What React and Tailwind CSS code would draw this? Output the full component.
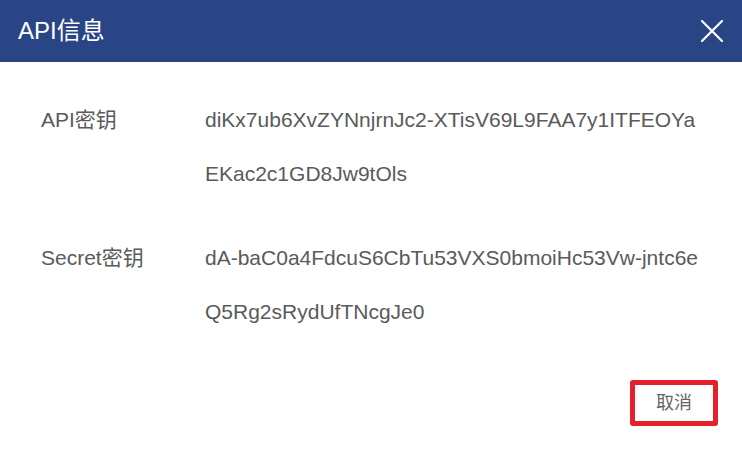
export default function App() {
  const rows = [
    { label: "API密钥", value: "diKx7ub6XvZYNnjrnJc2-XTisV69L9FAA7y1ITFEOYaEKac2c1GD8Jw9tOls" },
    { label: "Secret密钥", value: "dA-baC0a4FdcuS6CbTu53VXS0bmoiHc53Vw-jntc6eQ5Rg2sRydUfTNcgJe0" },
  ];

  return (
    <div
      className="w-[742px] h-[449px] bg-white flex flex-col"
      style={{ fontFamily: '"Liberation Sans", Arial, "Noto Sans CJK SC", sans-serif' }}
    >
      <div className="h-[62px] bg-[#2a4586] flex items-center justify-between pl-[18px] pr-[18px]">
        <span className="text-white text-[24px]">API信息</span>
        <svg width="22" height="22" viewBox="0 0 22 22" className="mr-[1px]">
          <path d="M1 1L21 21M21 1L1 21" stroke="#fff" strokeWidth="2.2" strokeLinecap="round" />
        </svg>
      </div>

      <div className="flex-1 flex flex-col pt-[31px] pl-[41px]">
        <div className="flex flex-col gap-[30px]">
          {rows.map((r) => (
            <div key={r.label} className="flex text-[21px] leading-[54px] text-[#5a5a5a]">
              <div className="w-[164px] shrink-0">{r.label}</div>
              <div className="w-[500px] break-all">{r.value}</div>
            </div>
          ))}
        </div>

        <div className="flex justify-end mt-auto pr-[24px] pb-[23px]">
          <button className="w-[88px] h-[46px] border-[5px] border-[#e5202b] rounded-[3px] text-[18px] text-[#666] bg-white">
            取消
          </button>
        </div>
      </div>
    </div>
  );
}
